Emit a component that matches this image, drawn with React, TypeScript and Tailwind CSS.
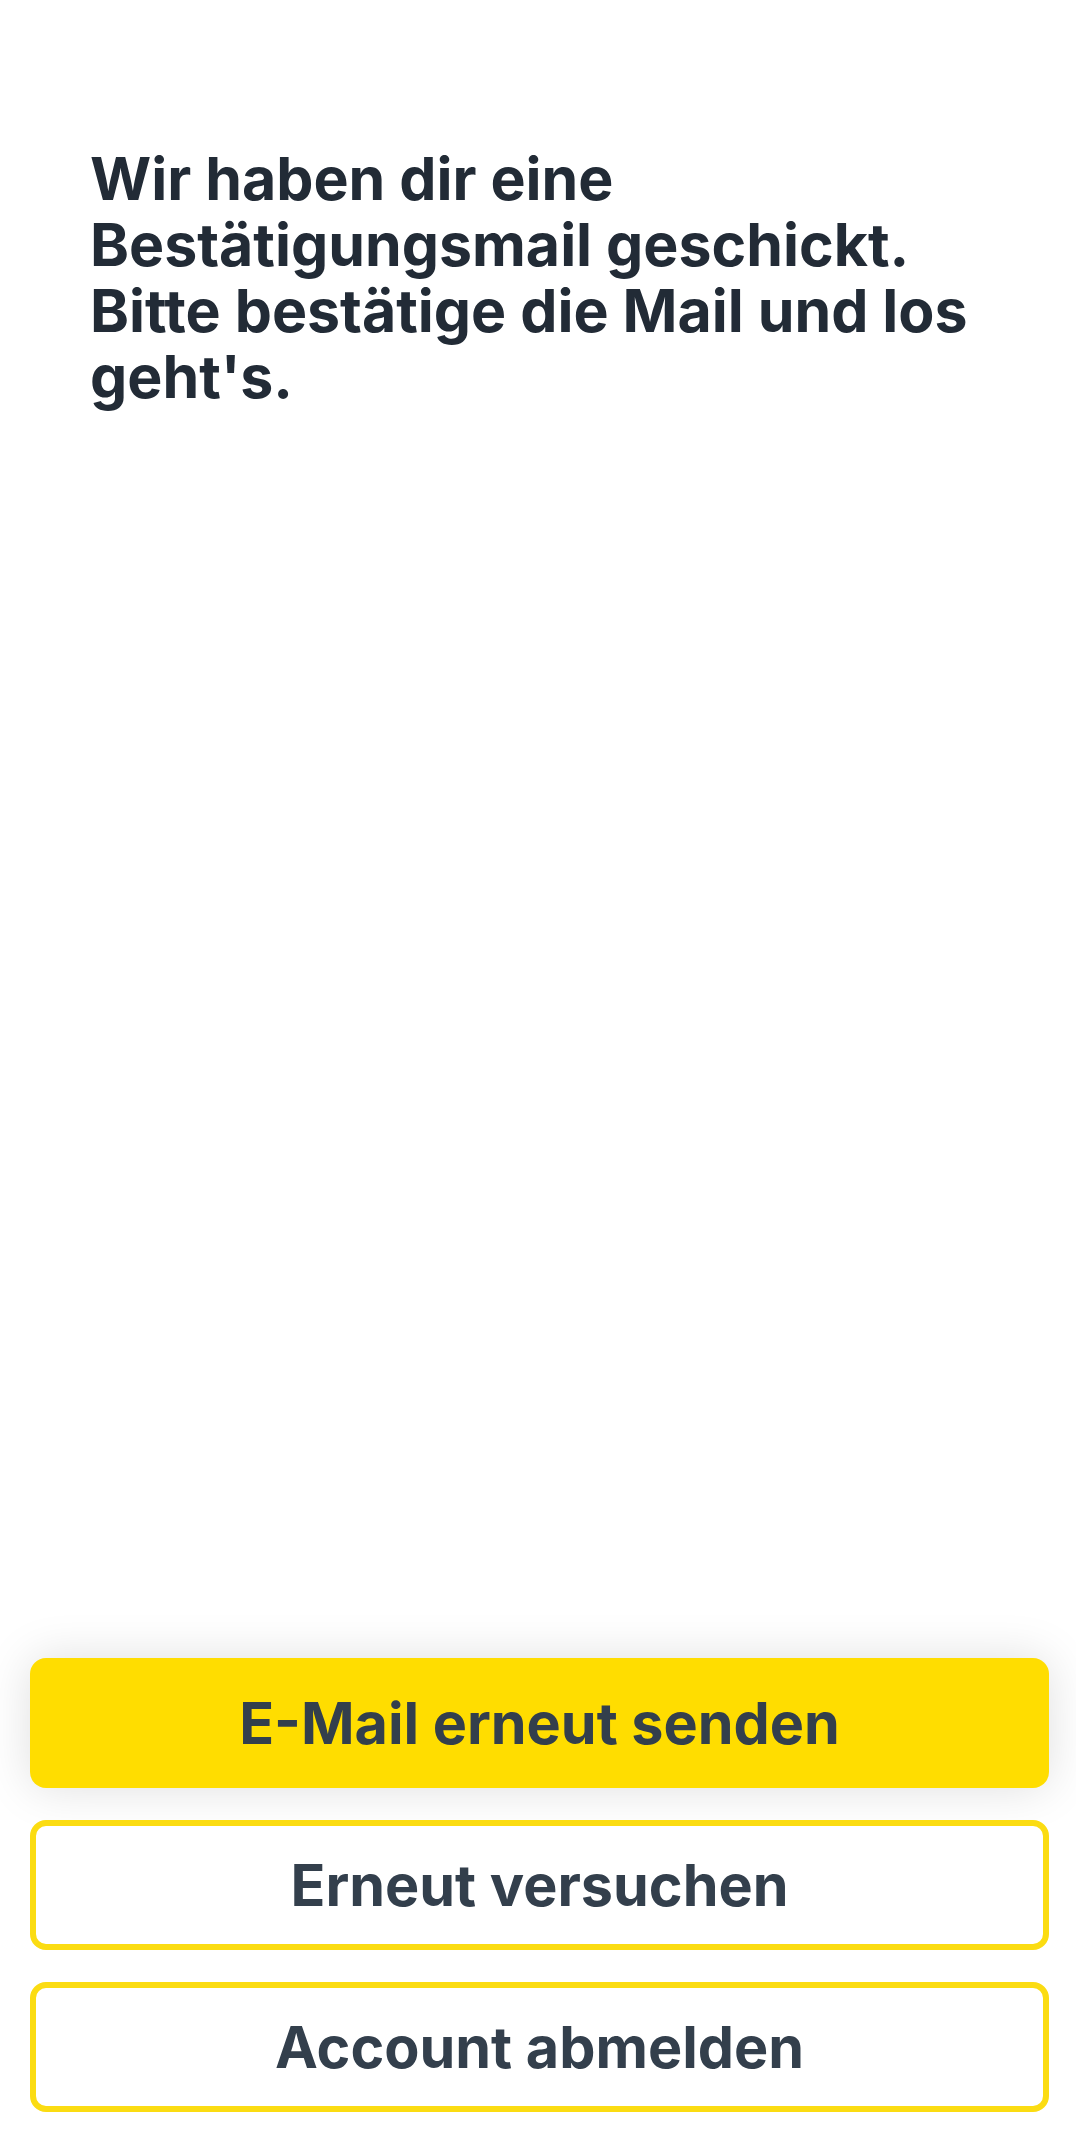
const font = { fontFamily: 'Inter, "Noto Sans", sans-serif' };

export default function App() {
  return (
    <div className="min-h-screen bg-white flex flex-col justify-between" style={font}>
      <div className="pt-[146px] pl-[90px] pr-[86px]">
        <h1 className="text-[59px] leading-[66px] font-bold text-[#222b36] tracking-normal">
          Wir haben dir eine Bestätigungsmail geschickt. Bitte bestätige die Mail und los geht's.
        </h1>
      </div>

      <div className="flex flex-col gap-[32px] pl-[30px] pr-[27px] pb-[18px]">
        <button className="h-[130px] w-full rounded-[16px] bg-[#ffdd00] text-[57.5px] font-bold text-[#333f4c] shadow-[0_0_48px_rgba(0,0,0,0.13)]">
          E-Mail erneut senden
        </button>
        <button className="h-[130px] w-full rounded-[16px] border-[6px] border-[#fbdc12] bg-white text-[57.5px] font-bold text-[#333f4c]">
          Erneut versuchen
        </button>
        <button className="h-[130px] w-full rounded-[16px] border-[6px] border-[#fbdc12] bg-white text-[57.5px] font-bold text-[#333f4c]">
          Account abmelden
        </button>
      </div>
    </div>
  );
}
